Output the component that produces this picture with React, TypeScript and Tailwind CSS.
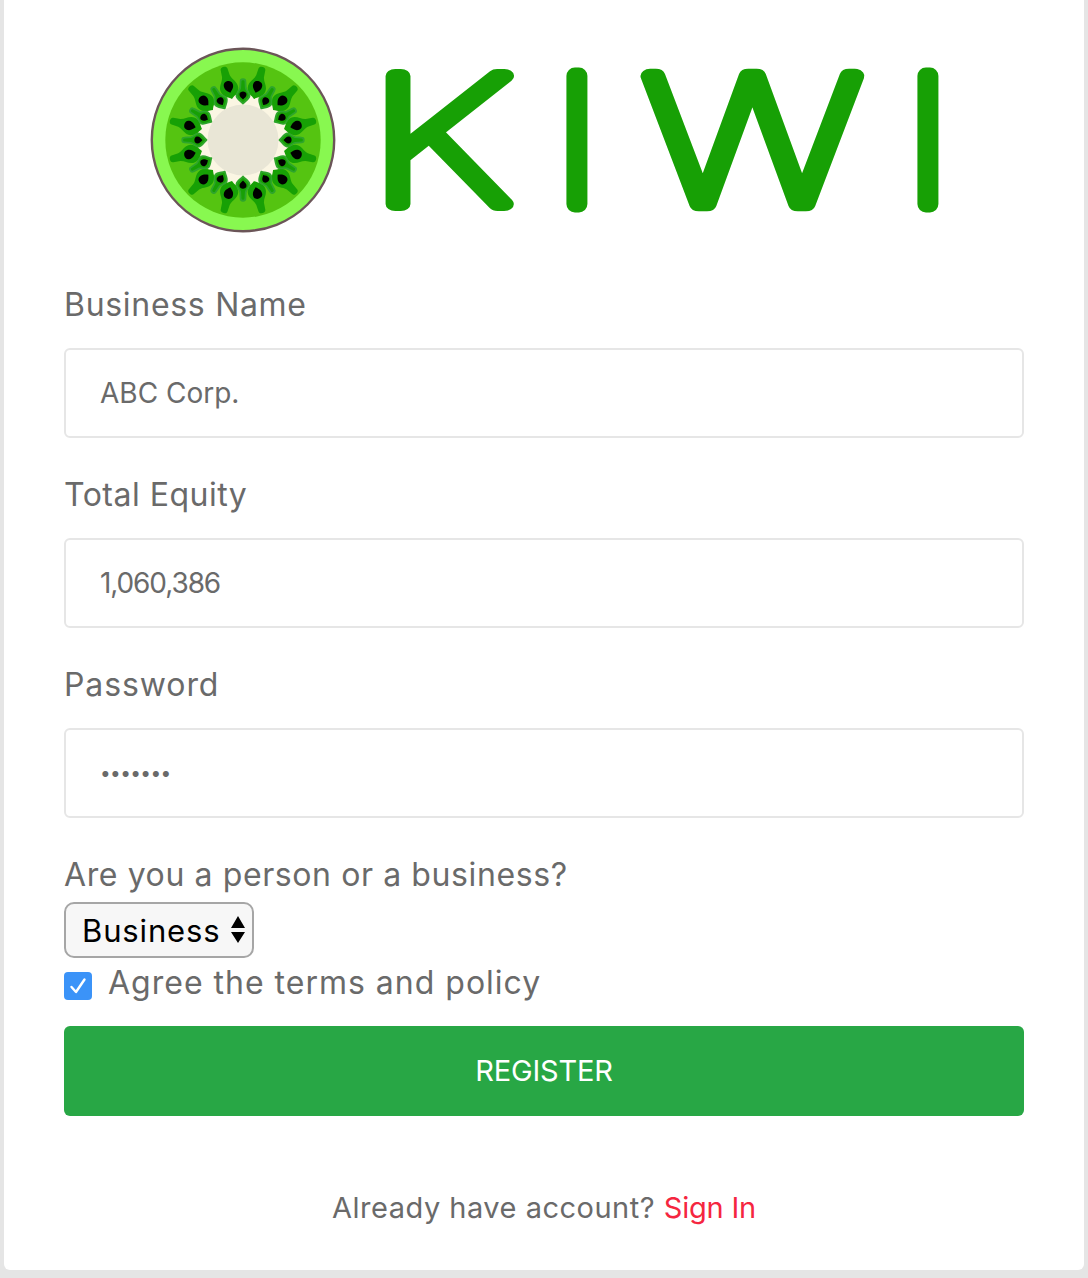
const angles = [0, 30, 60, 90, 120, 150, 180, 210, 240, 270, 300, 330];

function Kiwi() {
  return (
    <svg width="186" height="186" viewBox="-93 -93 186 186" className="shrink-0">
      <circle r="91.2" fill="#88f850" stroke="#6b5558" strokeWidth="2.4" />
      <circle r="77.7" fill="#55c411" />
      <circle r="45.5" fill="#fbf6e3" />
      <circle r="35.5" fill="#e9e6d6" />
      {angles.map((a) => (
        <g key={`l${a}`} transform={`rotate(${a + 15})`}>
          <path
            d="M-3.5 -73 C-3.5 -76.5 3.5 -76.5 3.5 -73 L4 -66 C5 -61 10 -58 9 -52 C8 -47 3 -45 0 -42.5 C-3 -45 -8 -47 -9 -52 C-10 -58 -5 -61 -4 -66 Z"
            fill="#17a005"
          />
          <path d="M0 -49 C-2 -51 -5 -53 -4.6 -57 C-4.2 -62 4.2 -62 4.6 -57 C5 -53 2 -51 0 -49 Z" fill="#000" />
        </g>
      ))}
      {angles.map((a) => (
        <g key={`s${a}`} transform={`rotate(${a})`}>
          <path
            d="M-2.4 -58.5 C-2.4 -61.5 2.4 -61.5 2.4 -58.5 L2.8 -52 C3.5 -49 7 -47 6.5 -44 C6 -41 2 -39 0 -36.5 C-2 -39 -6 -41 -6.5 -44 C-7 -47 -3.5 -49 -2.8 -52 Z"
            fill="#17a005"
            stroke="#2ea52c"
            strokeWidth="1.8"
            strokeLinejoin="round"
          />
          <path d="M0 -40.5 C-1.5 -42 -3.8 -43.5 -3.5 -46 C-3.2 -49.5 3.2 -49.5 3.5 -46 C3.8 -43.5 1.5 -42 0 -40.5 Z" fill="#000" />
        </g>
      ))}
    </svg>
  );
}

function Letter({ ch, x, sx }: { ch: string; x: number; sx: number }) {
  return (
    <text
      transform={`translate(${x} 156.5) scale(${sx} 1)`}
      fontFamily="Inter, sans-serif"
      fontWeight="100"
      fontSize="176"
      fill="#17a005"
      stroke="#17a005"
      strokeWidth="17"
      strokeLinejoin="round"
      strokeLinecap="round"
      vectorEffect="non-scaling-stroke"
    >
      {ch}
    </text>
  );
}

function Logo() {
  return (
    <div className="flex h-[186px] pl-[146px]">
      <Kiwi />
      <svg width="620" height="186" viewBox="0 0 620 186" className="shrink-0 overflow-visible" aria-label="KIWI">
        <Letter ch="K" x={32} sx={1.37} />
        <Letter ch="I" x={219} sx={1} />
        <Letter ch="W" x={306.5} sx={1.345} />
        <Letter ch="I" x={570} sx={1} />
      </svg>
    </div>
  );
}

function Field({
  label,
  value,
  type = "text",
  labelClass,
  inputClass,
}: {
  label: string;
  value: string;
  type?: string;
  labelClass: string;
  inputClass: string;
}) {
  return (
    <div className="mb-[33px]">
      <label className={`mb-[19px] block h-[48px] text-[32px] leading-[48px] text-[#6a6a6a] ${labelClass}`}>{label}</label>
      <input
        readOnly
        type={type}
        value={value}
        className={`block h-[90px] w-full rounded-[6px] border-2 border-[#e6e6e6] bg-white px-[34px] text-[#6a6a6a] outline-none ${inputClass}`}
      />
    </div>
  );
}

export default function App() {
  return (
    <div className="min-h-[1278px] bg-[#e5e5e5] px-1 font-['Inter',sans-serif]">
      <div className="h-[1270px] rounded-b-[6px] bg-white pt-[47px]">
        <Logo />
        <form className="mt-[48px] px-[60px]">
          <Field label="Business Name" value="ABC Corp." labelClass="tracking-[0.7px]" inputClass="text-[28px]" />
          <Field label="Total Equity" value="1,060,386" labelClass="tracking-[0.5px]" inputClass="text-[28px] tracking-[-1.1px]" />
          <Field label="Password" value="1234567" type="password" labelClass="tracking-[0.9px]" inputClass="text-[19px] tracking-[-0.6px]" />
          <div className="h-[48px] text-[32px] leading-[48px] tracking-[0.6px] text-[#6a6a6a]">Are you a person or a business?</div>
          <div className="mt-[3px] flex h-[56px] w-[190px] items-center justify-between rounded-[10px] border-2 border-[#a6a6a6] bg-[#f7f7f7] pl-[16px] pr-[6px] text-[31px] tracking-[0.85px] text-black">
            <span className="translate-y-[1px]">Business</span>
            <svg width="16" height="30" viewBox="0 0 16 30">
              <path d="M8 1 L15 13 H1 Z M8 28 L1 17 H15 Z" fill="#000" />
            </svg>
          </div>
          <div className="flex h-[50px] items-center gap-[16px] text-[32px] tracking-[1px] text-[#6a6a6a]">
            <span className="flex h-[28px] w-[28px] translate-y-[3px] items-center justify-center rounded-[4px] bg-[#3b93f8]">
              <svg width="20" height="20" viewBox="0 0 20 20" fill="none">
                <path d="M3.5 11 L8 16 L16.5 3.5" stroke="#fff" strokeWidth="2.4" strokeLinecap="round" strokeLinejoin="round" />
              </svg>
            </span>
            <span>Agree the terms and policy</span>
          </div>
          <button type="button" className="mt-[18px] block h-[90px] w-full rounded-[6px] bg-[#28a745] text-[29px] tracking-[-0.2px] text-white">
            REGISTER
          </button>
          <p className="mt-[68px] h-[48px] text-center text-[29px] leading-[48px] tracking-[0.5px] text-[#6a6a6a]">
            Already have account? <span className="tracking-[-0.2px] text-[#f5263f]">Sign In</span>
          </p>
        </form>
      </div>
    </div>
  );
}
